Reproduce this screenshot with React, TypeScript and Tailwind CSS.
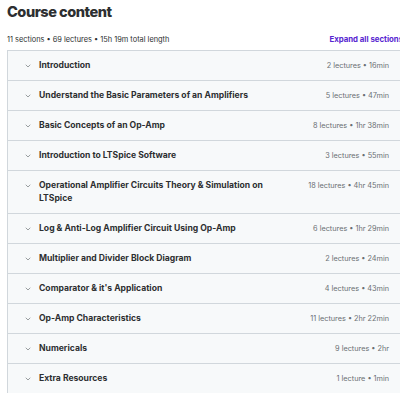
import { ChevronDown } from "lucide-react";

interface Section {
  title: string;
  meta: string;
}

const sections: Section[] = [
  { title: "Introduction", meta: "2 lectures • 16min" },
  { title: "Understand the Basic Parameters of an Amplifiers", meta: "5 lectures • 47min" },
  { title: "Basic Concepts of an Op-Amp", meta: "8 lectures • 1hr 38min" },
  { title: "Introduction to LTSpice Software", meta: "3 lectures • 55min" },
  { title: "Operational Amplifier Circuits Theory & Simulation on LTSpice", meta: "18 lectures • 4hr 45min" },
  { title: "Log & Anti-Log Amplifier Circuit Using Op-Amp", meta: "6 lectures • 1hr 29min" },
  { title: "Multiplier and Divider Block Diagram", meta: "2 lectures • 24min" },
  { title: "Comparator & it's Application", meta: "4 lectures • 43min" },
  { title: "Op-Amp Characteristics", meta: "11 lectures • 2hr 22min" },
  { title: "Numericals", meta: "9 lectures • 2hr" },
  { title: "Extra Resources", meta: "1 lecture • 1min" },
];

export default function App() {
  return (
    <div className="w-[400px] h-[393px] overflow-hidden bg-white font-['Inter',sans-serif] text-[#2d2f31]">
      <div className="ml-[7px] w-[396px]">
        <h2 className="pt-[2px] text-[14.6px] font-extrabold leading-[20px] tracking-[-0.5px]">Course content</h2>

        {/* summary line */}
        <div className="mt-[10px] flex items-center justify-between h-[16px]">
          <span className="text-[7.4px] text-[#2d2f31]">11 sections • 69 lectures • 15h 19m total length</span>
          <span className="text-[7.8px] font-bold text-[#5624d0] whitespace-nowrap">Expand all sections</span>
        </div>

        {/* ── Section list ─────────────────────────────── */}
        <div className="mt-[2px] border border-[#d1d7dc] bg-[#f7f9fa]">
          {sections.map((s, i) => (
            <div
              key={s.title}
              className={`flex items-start gap-[7px] pl-[16px] pr-[13px] py-[8px] ${i > 0 ? "border-t border-[#d1d7dc]" : ""}`}
            >
              <ChevronDown size={8} strokeWidth={2} className="mt-[2.5px] shrink-0 text-[#6a6f73]" />
              <p className="flex-1 min-w-0 text-[8.6px] font-bold leading-[13px] pr-[20px]">{s.title}</p>
              <span className="shrink-0 text-[7.3px] leading-[13px] text-[#6a6f73]">{s.meta}</span>
            </div>
          ))}
        </div>
      </div>
    </div>
  );
}
